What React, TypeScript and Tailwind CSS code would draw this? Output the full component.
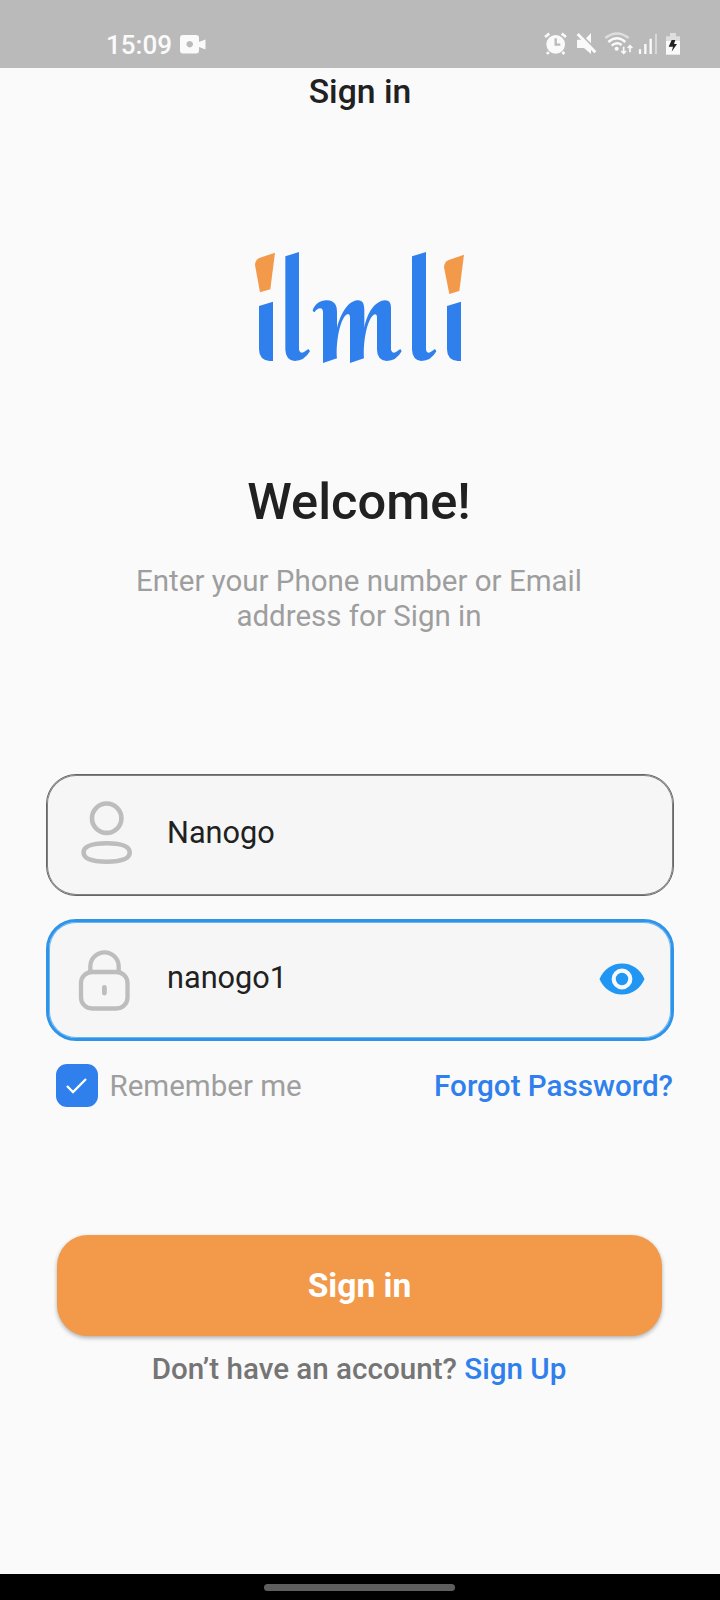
import React from "react";

function StatusBar() {
  return (
    <header className="flex h-[68px] shrink-0 items-start justify-between bg-[#bababa] text-[#fafafa]">
      <div className="flex pt-[28px] pl-[106px]">
        <span className="text-[26px] leading-[34px] font-medium">15:09</span>
        <svg className="mt-[7px] ml-[8px] h-[19px] w-[26px]" viewBox="0 0 26 19" fill="currentColor">
          <path
            fillRule="evenodd"
            d="M3 0H16Q19 0 19 3V7L25.500 4.600V14.600L19 12V15.500Q19 18.500 16 18.500H3Q0 18.500 0 15.500V3Q0 0 3 0ZM9.700 5.900a3.300 3.300 0 1 0 .01 0Z"
          />
        </svg>
      </div>
      <svg className="mt-5 mr-5 h-[48px] w-[170px]" viewBox="0 0 510 144" fill="none" stroke="#fafafa">
        <path strokeWidth="8" d="M45 51L58 41M95 41L108 51M56 96L51 102M97 96L103 102" />
        <circle cx="77" cy="73" r="28" fill="#fafafa" stroke="none" />
        <path stroke="#bababa" strokeWidth="7" d="M77 55V74H91" />
        <path fill="#fafafa" stroke="none" d="M141 59H158L183 84V102L162 84H141ZM183 39V70L168 55Z" />
        <path strokeWidth="9" d="M143 42L196 97" />
        <path strokeWidth="7" stroke="#dedede" d="M226 54Q261 27 296 54" />
        <path strokeWidth="7" d="M235 66Q261 44 286 66M245 77Q260 64 275 75" />
        <circle cx="260" cy="86" r="6" fill="#fafafa" stroke="none" />
        <path strokeWidth="5" d="M281 80V100M274 93L281 100L288 93M300 97V77M293 84L300 77L307 84" />
        <path strokeWidth="7" d="M330 88V102M346 72V102M362 56V102" />
        <path strokeWidth="6" stroke="#d8d8d8" d="M378 41V102" />
        <path fill="#dedede" stroke="none" d="M420 39H438V49H450V64H408V49H420Z" />
        <path fill="#fafafa" stroke="none" d="M408 63H450V104H408Z" />
        <path fill="#222" stroke="none" d="M425 60H436L432 72H441L425 95L429 80H416Z" />
      </svg>
    </header>
  );
}

function Logo() {
  return (
    <svg role="img" aria-label="ilmli" className="h-[130px] w-[240px]" viewBox="0 0 720 390">
      <g fill="#f2994a">
        <path d="M105 38L91 148L60 157L45 75Q45 61 58 54Z" />
        <path d="M672 44L658 153L628 162L612 82Q612 67 626 60Z" />
      </g>
      <g fill="#2f80ed">
        <path d="M57 198L99 185V363H89Q57 360 57 327Z" />
        <path d="M621 198L663 185V363H653Q621 360 621 327Z" />
        <path d="M136 49L177 36V329Q180 342 192 336L205 327L210 334Q193 363 164 363Q137 360 136 329Z" />
        <path d="M516 49L558 36V329Q560 342 572 336L585 327L589 334Q573 363 544 363Q517 360 516 329Z" />
        <path d="M218 211C225 190 243 180 261 181C284 182 292 196 291 219V263C302 223 322 184 352 181C368 180 373 190 373 211V263C382 220 402 184 435 181C451 181 454 193 453 211V329Q456 342 468 336L481 327L485 334Q469 363 440 363Q411 360 411 329V231Q411 219 401 224C380 241 369 307 372 355L330 369V231Q329 218 319 224C300 238 287 307 291 355L249 369V216C248 200 233 203 224 216Q219 217 218 211Z" />
      </g>
    </svg>
  );
}

function UserIcon() {
  return (
    <svg className="h-16 w-[54px] shrink-0" viewBox="0 0 54 64" fill="none" stroke="#bdbdbd" strokeWidth="4.600">
      <circle cx="26.700" cy="18.200" r="14.700" />
      <path d="M26.700 43.300C38 43.300 49.700 45.400 49.700 52.600S38 61.700 26.700 61.700S3.600 59.700 3.600 52.600S15 43.300 26.700 43.300Z" />
    </svg>
  );
}

function LockIcon() {
  return (
    <svg className="h-16 w-[54px] shrink-0" viewBox="0 0 54 64" fill="none" stroke="#bdbdbd" strokeWidth="4.300">
      <path d="M13.300 24V17.500a14.200 14.200 0 0 1 28.400 0V24" />
      <rect x="4" y="23" width="46.500" height="36.500" rx="11" />
      <path strokeWidth="4.800" strokeLinecap="round" d="M27.400 38.500V44" />
    </svg>
  );
}

export default function App() {
  return (
    <div className="flex h-[1600px] w-[720px] flex-col overflow-hidden bg-[#fafafa] font-[Roboto,sans-serif] text-[#212121]">
      <StatusBar />
      <main className="flex flex-1 flex-col items-center">
        <h1 className="mt-px text-[33.700px] leading-[46px] font-medium">Sign in</h1>
        <div className="mt-[125px] h-[130px]">
          <Logo />
        </div>
        <h2 className="mt-[102px] mr-[2px] text-[50.600px] leading-[60px] font-medium">Welcome!</h2>
        <p className="mt-[32px] mr-[2px] w-[500px] text-center text-[29.500px] leading-[35px] text-[#9e9e9e]">
          Enter your Phone number or Email address for Sign in
        </p>

        <div className="mt-[140px] flex h-[122px] w-[628px] items-start rounded-[30px] border border-[#666] bg-[#f6f6f6] pt-[25px] pl-[33px] shadow-[inset_0_0_0_1px_#808080]">
          <UserIcon />
          <span className="mt-[13px] ml-[33px] text-[30.700px] leading-[40px]">Nanogo</span>
        </div>
        <div className="mt-[23px] flex h-[122px] w-[628px] items-start rounded-[30px] border-[3px] border-[#2d94e9] bg-[#f6f6f6] pt-[27px] pr-[26px] pl-[28px] shadow-[inset_0_0_0_1px_#6eb5ef]">
          <LockIcon />
          <span className="mt-[9px] ml-[36px] flex-1 text-[30.700px] leading-[40px]">nanogo1</span>
          <svg className="mt-[14px] h-[32px] w-[46px]" viewBox="0 0 46 32">
            <path fill="#2196f3" d="M.5 16C4.200 6.700 13 .5 23 .5S41.800 6.700 45.500 16C41.800 25.300 33 31.500 23 31.500S4.200 25.300 .5 16Z" />
            <circle cx="23" cy="16" r="8.300" fill="#2196f3" stroke="#f5f9fc" strokeWidth="4.200" />
          </svg>
        </div>

        <div className="mt-[23px] flex h-[43px] w-[628px] items-center pr-px pl-[9.500px]">
          <span className="flex h-[42.500px] w-[42.500px] items-center justify-center rounded-[11px] bg-[#2f80ed]">
            <svg className="h-[16px] w-[21px]" viewBox="0 0 21 16" fill="none" stroke="#fff" strokeWidth="2.300">
              <path d="M1 8L7 14L20 1" />
            </svg>
          </span>
          <span className="ml-[11.500px] text-[29.500px] leading-[34px] text-[#9e9e9e]">Remember me</span>
          <a className="ml-auto text-[29.600px] leading-[34px] font-medium text-[#2f80ed]">Forgot Password?</a>
        </div>

        <button className="mt-[128px] mr-px h-[101px] w-[605px] shrink-0 rounded-[31px] bg-[#f2994a] text-[33.600px] leading-[40px] font-bold text-white shadow-[0_2px_4px_rgba(0,0,0,0.3)]">
          Sign in
        </button>
        <p className="mt-[13px] mr-[2px] text-[29.600px] leading-[40px] font-medium text-[#757575]">
          Don’t have an account? <a className="text-[#2f80ed]">Sign Up</a>
        </p>
      </main>
      <footer className="flex h-[26px] shrink-0 justify-center bg-black pt-[10px]">
        <div className="mr-px h-[7px] w-[191px] rounded-full bg-[#5e5e5e]" />
      </footer>
    </div>
  );
}
